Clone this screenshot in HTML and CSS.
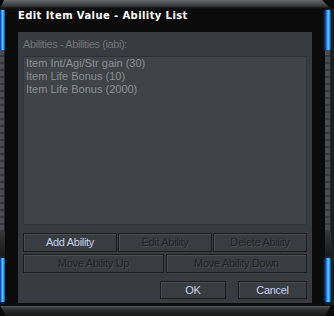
FILE: index.html
```html
<!DOCTYPE html>
<html>
<head>
<meta charset="utf-8">
<link rel="stylesheet" href="styles.css">
</head>
<body>
<div class="window">
  <div class="topbar"></div>
  <div class="middle">
    <div class="rail">
      <div class="glow top"></div>
      <div class="metal"></div>
      <div class="joint"></div>
      <div class="glow bottom"></div>
    </div>
    <div class="inner">
      <div class="title">Edit Item Value - Ability List</div>
      <div class="panel">
        <div class="label">Abilities - Abilities (iabi):</div>
        <div class="list">
          <div class="item">Item Int/Agi/Str gain (30)</div>
          <div class="item">Item Life Bonus (10)</div>
          <div class="item">Item Life Bonus (2000)</div>
        </div>
        <div class="row three">
          <div class="btn on">Add Ability</div>
          <div class="btn off">Edit Ability</div>
          <div class="btn off">Delete Ability</div>
        </div>
        <div class="row two">
          <div class="btn off">Move Ability Up</div>
          <div class="btn off">Move Ability Down</div>
        </div>
        <div class="row end">
          <div class="btn on ok">OK</div>
          <div class="btn on cancel">Cancel</div>
        </div>
      </div>
    </div>
    <div class="rail right">
      <div class="glow top"></div>
      <div class="metal"></div>
      <div class="joint"></div>
      <div class="glow bottom"></div>
    </div>
    <div class="edge"></div>
  </div>
  <div class="bottombar"></div>
</div>
</body>
</html>
```
FILE: styles.css
```css
html, body {
  margin: 0;
  padding: 0;
  background: #0a0a0a;
}
.window {
  width: 334px;
  height: 316px;
  display: flex;
  flex-direction: column;
  background: #0a0a0a;
  overflow: hidden;
}
.topbar {
  height: 9px;
  width: 331px;
  background: linear-gradient(to bottom, #6c6c6e 0px, #57585a 2px, #3e3f41 5px, #2a2b2c 7px, #111 8px);
  clip-path: polygon(4px 0, 322px 0, 331px 9px, 0 9px);
}
.middle {
  flex: 1;
  display: flex;
}
.rail {
  width: 5px;
  display: flex;
  flex-direction: column;
  background: #111;
}
.rail.right {
  width: 6px;
}
.glow {
  background: linear-gradient(to right, #0a2f78 0, #1a7cf0 25%, #6ad0ff 55%, #1d86ee 80%, #0a3a90 100%);
  box-shadow: 0 0 3px #1a6ae0;
  border-radius: 1px;
}
.glow.top {
  margin-top: 1px;
  height: 40px;
}
.glow.bottom {
  height: 44px;
  margin-bottom: 3px;
}
.metal {
  flex: 1;
  background: repeating-linear-gradient(to bottom, #4a4c4f 0, #4a4c4f 5px, #36383b 5px, #36383b 7px);
  border-right: 1px solid #222426;
}
.joint {
  height: 26px;
  background: linear-gradient(to bottom, #333537, #161718);
}
.edge {
  width: 3px;
  background: #1c1d1f;
}
.inner {
  flex: 1;
  background: #0b0b0b;
  padding: 0 13px 2px 13px;
  display: flex;
  flex-direction: column;
}
.title {
  height: 22px;
  padding-top: 1px;
  font-family: "DejaVu Sans", sans-serif;
  font-weight: bold;
  font-size: 10px;
  line-height: 12px;
  color: #ffffff;
  letter-spacing: 0.4px;
  white-space: nowrap;
}
.panel {
  height: 271px;
  box-sizing: border-box;
  background: #383b3f;
  padding: 6px 5px 4px 5px;
  display: flex;
  flex-direction: column;
  font-family: "Liberation Sans", Arial, sans-serif;
  font-size: 11px;
}
.label {
  line-height: 13px;
  color: #72757a;
  letter-spacing: -0.4px;
  white-space: nowrap;
}
.list {
  margin-top: 5px;
  height: 169px;
  box-sizing: border-box;
  background: #404347;
  border: 1px solid #33363a;
  border-top-color: #2f3235;
  padding: 0 2px;
}
.item {
  line-height: 13px;
  color: #8c8f94;
  white-space: nowrap;
}
.row {
  display: flex;
  margin-top: 2px;
}
.row.three {
  margin-top: 8px;
  gap: 1px;
}
.row.two {
  gap: 2px;
}
.row.end {
  margin-top: 8px;
  justify-content: flex-end;
  gap: 12px;
}
.btn {
  flex: 1;
  height: 19px;
  box-sizing: border-box;
  border: 1px solid #1c1d1f;
  box-shadow: inset 1px 1px 0 #4a4d51;
  background: #393c40;
  text-align: center;
  line-height: 17px;
  letter-spacing: -0.3px;
  white-space: nowrap;
}
.row.end .btn {
  flex: none;
  height: 18px;
  line-height: 16px;
}
.btn.ok {
  width: 66px;
}
.btn.cancel {
  width: 69px;
}
.btn.on {
  color: #c9d2f2;
}
.btn.off {
  color: #222427;
  text-shadow: 1px 1px 0 #4a4d51;
}
.bottombar {
  height: 11px;
  background: linear-gradient(to bottom, #111 0, #111 1px, #5a5b5d 1px, #3a3b3d 3px, #262728 6px, #1a1a1b 11px);
  clip-path: polygon(0 0, 331px 0, 325px 11px, 6px 11px);
}
```
